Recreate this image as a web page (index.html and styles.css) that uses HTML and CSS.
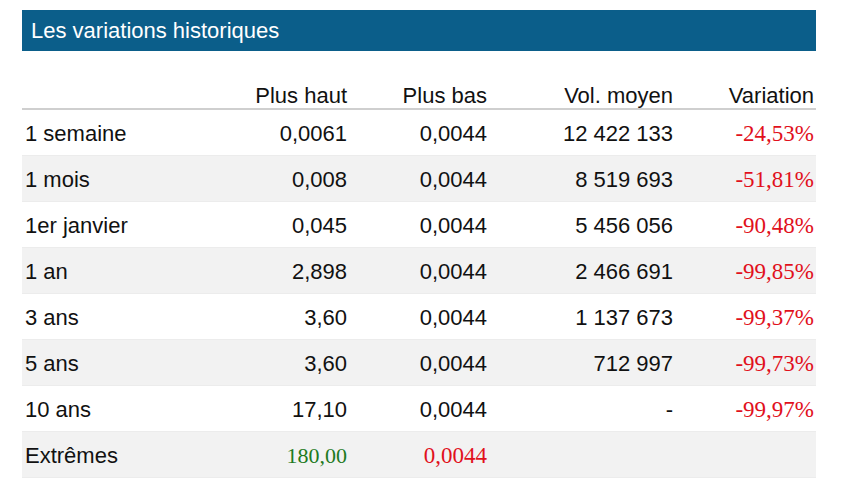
FILE: index.html
```html
<!DOCTYPE html>
<html lang="fr">
<head>
<meta charset="utf-8">
<title>Les variations historiques</title>
<link rel="stylesheet" href="styles.css">
</head>
<body>
<section class="panel">
  <h2 class="title">Les variations historiques</h2>
  <table class="hist">
    <colgroup>
      <col class="c-label"><col class="c-high"><col class="c-low"><col class="c-vol"><col class="c-var">
    </colgroup>
    <thead>
      <tr><th></th><th>Plus haut</th><th>Plus bas</th><th>Vol. moyen</th><th>Variation</th></tr>
    </thead>
    <tbody>
      <tr><td>1 semaine</td><td>0,0061</td><td>0,0044</td><td>12 422 133</td><td class="neg">-24,53%</td></tr>
      <tr><td>1 mois</td><td>0,008</td><td>0,0044</td><td>8 519 693</td><td class="neg">-51,81%</td></tr>
      <tr><td>1er janvier</td><td>0,045</td><td>0,0044</td><td>5 456 056</td><td class="neg">-90,48%</td></tr>
      <tr><td>1 an</td><td>2,898</td><td>0,0044</td><td>2 466 691</td><td class="neg">-99,85%</td></tr>
      <tr><td>3 ans</td><td>3,60</td><td>0,0044</td><td>1 137 673</td><td class="neg">-99,37%</td></tr>
      <tr><td>5 ans</td><td>3,60</td><td>0,0044</td><td>712 997</td><td class="neg">-99,73%</td></tr>
      <tr><td>10 ans</td><td>17,10</td><td>0,0044</td><td>-</td><td class="neg">-99,97%</td></tr>
      <tr><td>Extrêmes</td><td class="pos">180,00</td><td class="neg">0,0044</td><td></td><td></td></tr>
    </tbody>
  </table>
</section>
</body>
</html>
```
FILE: styles.css
```css
html, body {
  margin: 0;
  padding: 0;
  background: #ffffff;
}
body {
  font-family: "Liberation Sans", Arial, Helvetica, sans-serif;
  color: #111111;
}
.panel {
  width: 794px;
  margin: 10px 0 0 22px;
}
.title {
  margin: 0;
  height: 41px;
  line-height: 41px;
  padding-left: 9px;
  background: #0b5e8a;
  color: #ffffff;
  font-size: 22px;
  font-weight: normal;
}
.hist {
  width: 794px;
  margin-top: 29px;
  border-collapse: collapse;
  table-layout: fixed;
  font-size: 22px;
}
.c-label { width: 230px; }
.c-high { width: 97px; }
.c-low { width: 140px; }
.c-vol { width: 186px; }
.c-var { width: 141px; }
.hist th {
  font-weight: normal;
  text-align: right;
  padding: 4px 2px 0 0;
  line-height: 24px;
  border-bottom: 2px solid #cfcfcf;
  white-space: nowrap;
}
.hist td {
  height: 43px;
  padding: 2px 2px 0 0;
  text-align: right;
  border-bottom: 1px solid #ececec;
  white-space: nowrap;
}
.hist td:first-child {
  text-align: left;
  padding-left: 3px;
}
.hist tbody tr:nth-child(even) td {
  background: #f2f2f2;
}
.neg {
  font-family: "Liberation Serif", "Times New Roman", serif;
  color: #e1101c;
  font-size: 23px;
}
.pos {
  font-family: "Liberation Serif", "Times New Roman", serif;
  color: #1e7a1e;
  font-size: 22px;
}
```
